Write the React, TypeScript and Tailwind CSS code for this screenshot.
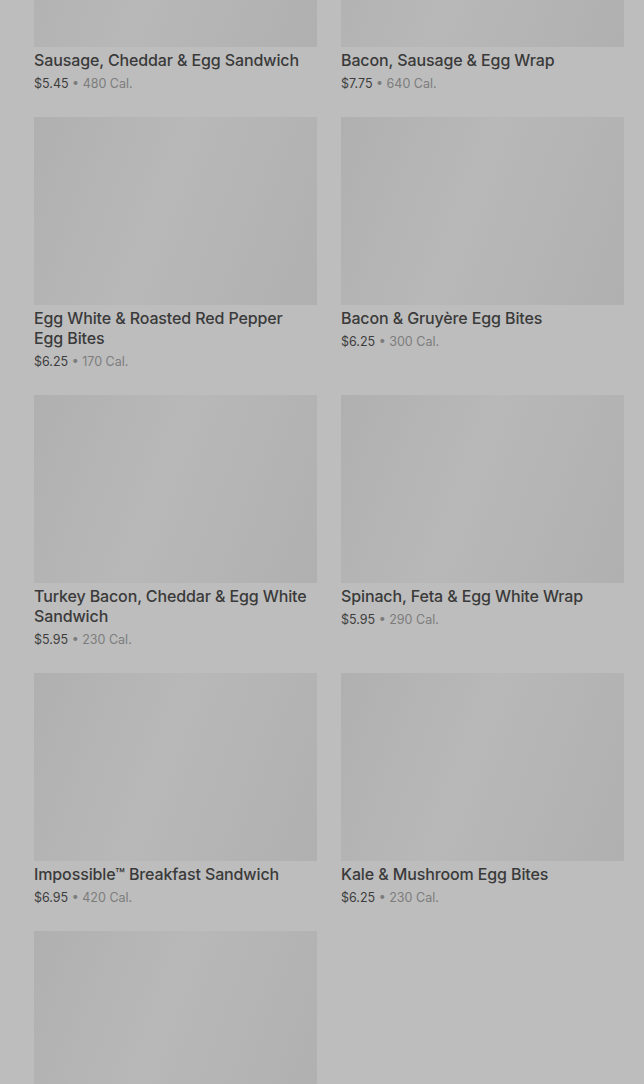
import React from "react";

type Item = { name: string; price: string; cal: string };

const items: Item[] = [
  { name: "Sausage, Cheddar & Egg Sandwich", price: "$5.45", cal: "480 Cal." },
  { name: "Bacon, Sausage & Egg Wrap", price: "$7.75", cal: "640 Cal." },
  { name: "Egg White & Roasted Red Pepper Egg Bites", price: "$6.25", cal: "170 Cal." },
  { name: "Bacon & Gruyère Egg Bites", price: "$6.25", cal: "300 Cal." },
  { name: "Turkey Bacon, Cheddar & Egg White Sandwich", price: "$5.95", cal: "230 Cal." },
  { name: "Spinach, Feta & Egg White Wrap", price: "$5.95", cal: "290 Cal." },
  { name: "Impossible™ Breakfast Sandwich", price: "$6.95", cal: "420 Cal." },
  { name: "Kale & Mushroom Egg Bites", price: "$6.25", cal: "230 Cal." },
  { name: "", price: "", cal: "" },
];

function Card({ item }: { item: Item }) {
  return (
    <div className="flex flex-col">
      <div className="h-[188px] w-full bg-[linear-gradient(110deg,#b0b0b0_0%,#b8b8b8_45%,#b0b0b0_100%)]" />
      {item.name && (
        <>
          <div className="mt-[3px] pr-[4px] text-[16px] leading-[20px] font-medium tracking-[-0.12px] text-[#3a3a3a]">
            {item.name}
          </div>
          <div className="mt-[5px] text-[12.5px] leading-[17px] text-[#3d3d3d]">
            {item.price}
            <span className="text-[#7c7c7c]"> • {item.cal}</span>
          </div>
        </>
      )}
    </div>
  );
}

export default function App() {
  return (
    <div
      className="w-[644px] h-[1084px] overflow-hidden bg-[#bdbdbd]"
      style={{ fontFamily: "Inter, Roboto, 'Liberation Sans', sans-serif" }}
    >
      <div className="mt-[-141px] pl-[34px] pr-[20px] grid grid-cols-2 gap-x-[24px] gap-y-[25px]">
        {items.map((it, i) => (
          <Card key={i} item={it} />
        ))}
      </div>
    </div>
  );
}
